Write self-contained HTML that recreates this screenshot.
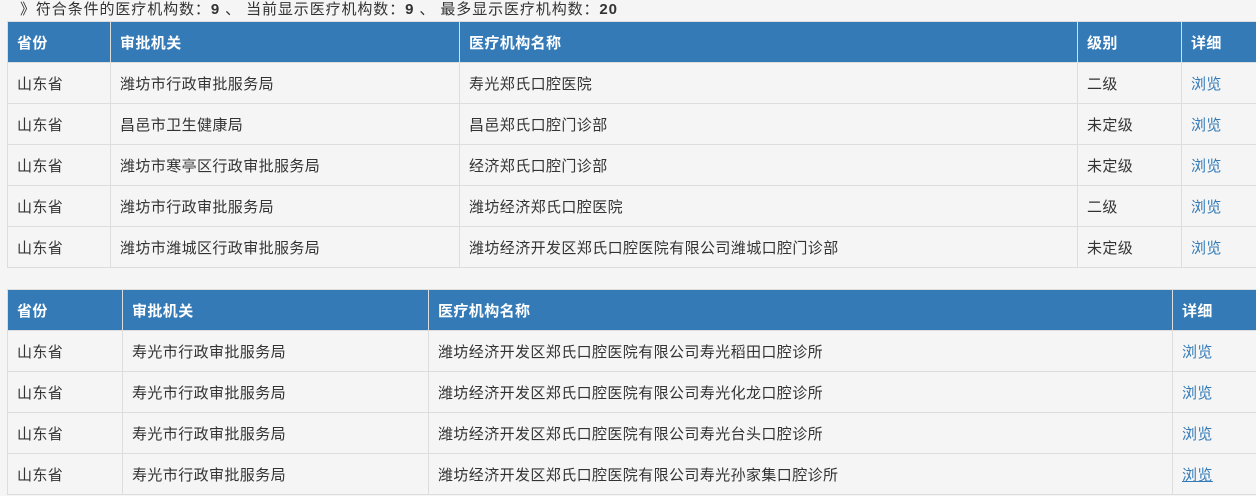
<!DOCTYPE html>
<html><head><meta charset="utf-8"><style>
body{margin:0;width:1256px;height:496px;overflow:hidden;background:#f5f5f5;font-family:"Liberation Sans","Noto Sans CJK SC",sans-serif;font-size:15px;color:#333;letter-spacing:0.4px}
.top{position:absolute;left:20px;top:0px;height:20px;line-height:20px;font-size:15px;letter-spacing:0.9px}
table{position:absolute;left:7px;border-collapse:collapse;table-layout:fixed}
td,th{border:1px solid #ddd;padding:0 0 0 9px;text-align:left;height:40px;white-space:nowrap;overflow:hidden}
th{background:#337ab7;color:#fff;font-weight:bold;border-color:#ddd}
a{color:#337ab7;text-decoration:none}
</style></head><body>
<div class="top">》符合条件的医疗机构数：<b>9</b> 、 当前显示医疗机构数：<b>9</b> 、 最多显示医疗机构数：<b>20</b></div>
<table style="top:21px;width:1256px">
<colgroup><col style="width:103px"><col style="width:349px"><col style="width:618px"><col style="width:104px"><col style="width:82px"></colgroup>
<tr><th>省份</th><th>审批机关</th><th>医疗机构名称</th><th>级别</th><th>详细</th></tr>
<tr><td>山东省</td><td>潍坊市行政审批服务局</td><td>寿光郑氏口腔医院</td><td>二级</td><td><a>浏览</a></td></tr>
<tr><td>山东省</td><td>昌邑市卫生健康局</td><td>昌邑郑氏口腔门诊部</td><td>未定级</td><td><a>浏览</a></td></tr>
<tr><td>山东省</td><td>潍坊市寒亭区行政审批服务局</td><td>经济郑氏口腔门诊部</td><td>未定级</td><td><a>浏览</a></td></tr>
<tr><td>山东省</td><td>潍坊市行政审批服务局</td><td>潍坊经济郑氏口腔医院</td><td>二级</td><td><a>浏览</a></td></tr>
<tr><td>山东省</td><td>潍坊市潍城区行政审批服务局</td><td>潍坊经济开发区郑氏口腔医院有限公司潍城口腔门诊部</td><td>未定级</td><td><a>浏览</a></td></tr>
</table>
<table style="top:289px;width:1256px">
<colgroup><col style="width:115px"><col style="width:306px"><col style="width:744px"><col style="width:91px"></colgroup>
<tr><th>省份</th><th>审批机关</th><th>医疗机构名称</th><th>详细</th></tr>
<tr><td>山东省</td><td>寿光市行政审批服务局</td><td>潍坊经济开发区郑氏口腔医院有限公司寿光稻田口腔诊所</td><td><a>浏览</a></td></tr>
<tr><td>山东省</td><td>寿光市行政审批服务局</td><td>潍坊经济开发区郑氏口腔医院有限公司寿光化龙口腔诊所</td><td><a>浏览</a></td></tr>
<tr><td>山东省</td><td>寿光市行政审批服务局</td><td>潍坊经济开发区郑氏口腔医院有限公司寿光台头口腔诊所</td><td><a>浏览</a></td></tr>
<tr><td>山东省</td><td>寿光市行政审批服务局</td><td>潍坊经济开发区郑氏口腔医院有限公司寿光孙家集口腔诊所</td><td><a style="text-decoration:underline">浏览</a></td></tr>
</table>
</body></html>
